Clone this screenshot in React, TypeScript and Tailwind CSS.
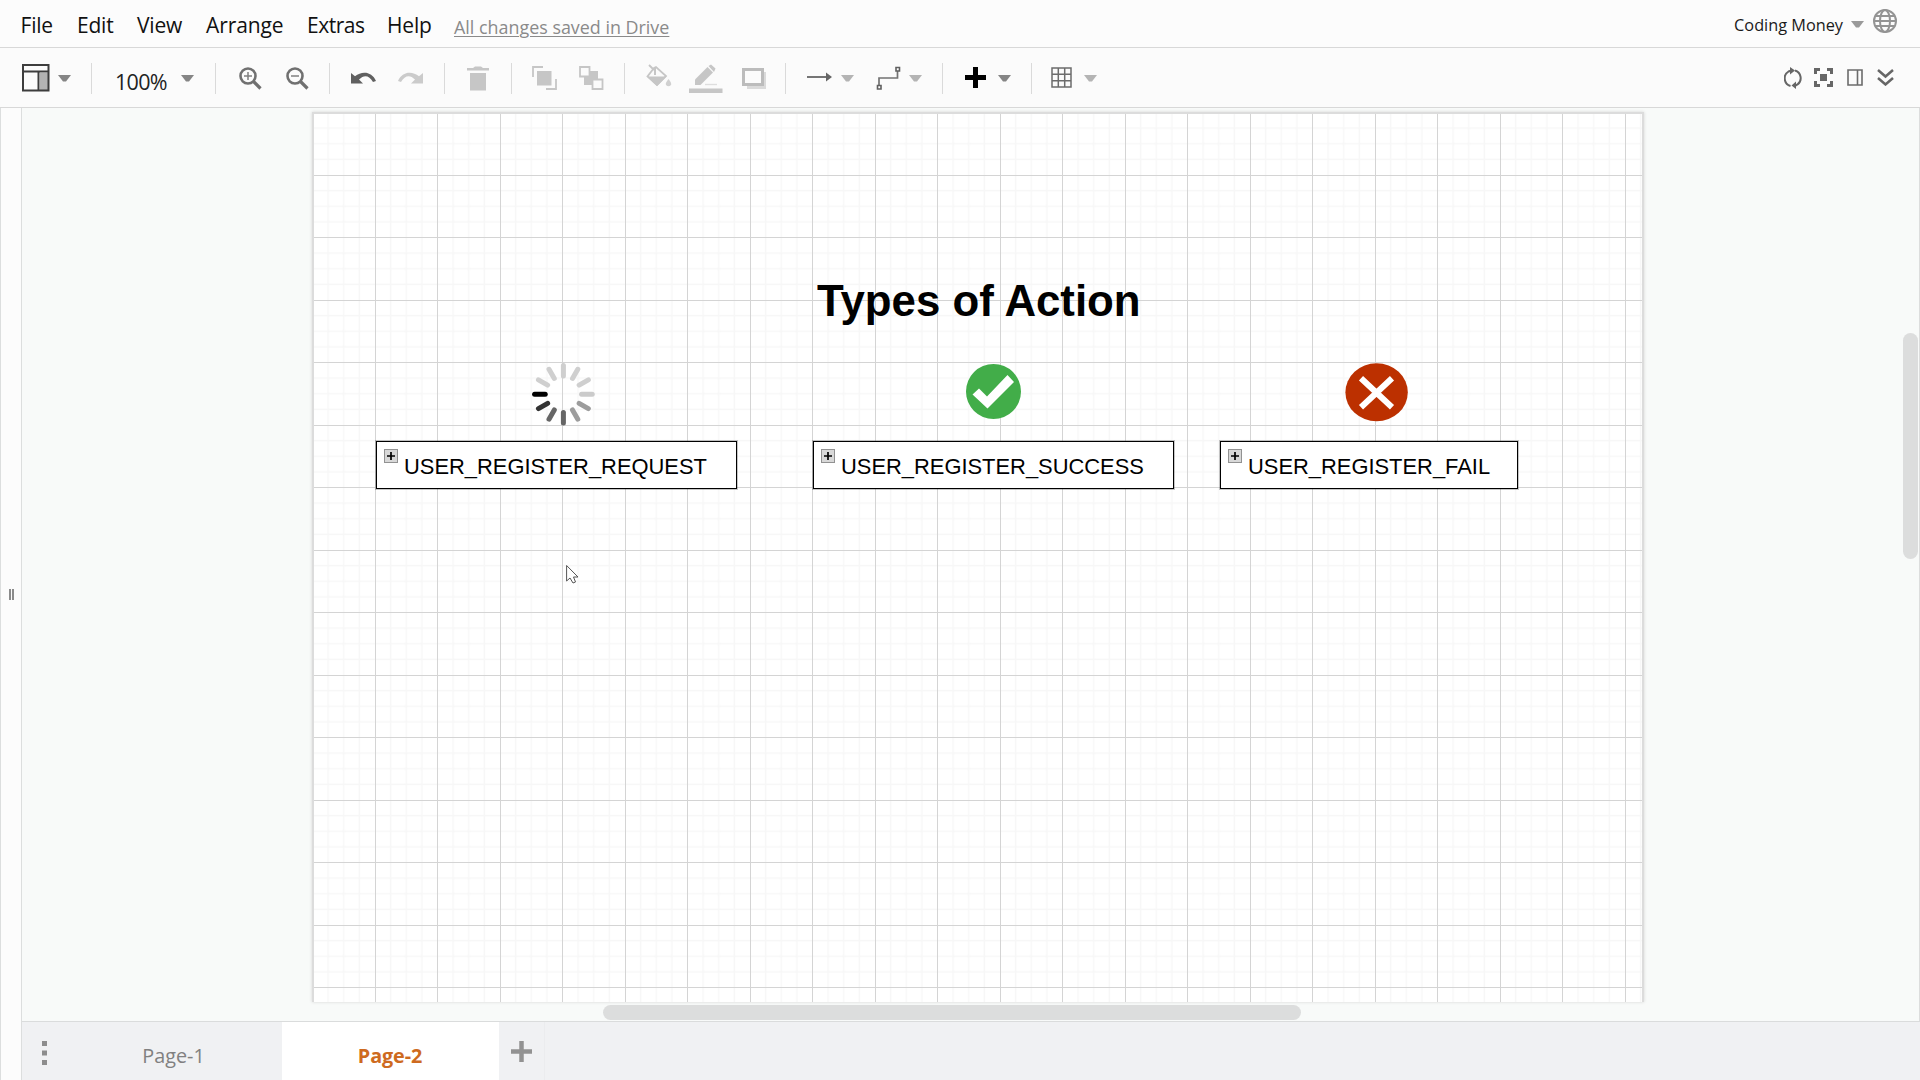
import React from "react";

type SvgProps = { w: number; h: number; className?: string; children: React.ReactNode };
const Icon = ({ w, h, className = "", children }: SvgProps) => (
  <svg width={w} height={h} viewBox={`0 0 ${w} ${h}`} className={`block shrink-0 ${className}`} fill="none">
    {children}
  </svg>
);

const Caret = ({ className = "", color = "#858585" }: { className?: string; color?: string }) => (
  <Icon w={13} h={7} className={className}>
    <path d="M0 0H13L8 6.5H5Z" fill={color} />
  </Icon>
);

const Sep = ({ className = "" }: { className?: string }) => (
  <div className={`h-[31px] w-px shrink-0 bg-[#dadada] ${className}`} />
);

function MenuBar() {
  return (
    <header className="flex h-12 shrink-0 items-center border-b border-[#d8d8d8] bg-[#fcfcfc] pl-[20.5px] pr-[23px]">
      <nav className="flex pt-[2px] text-[21px] leading-7 tracking-[-0.2px] text-[#111]">
        <span className="w-[56.5px]">File</span>
        <span className="w-[60px]">Edit</span>
        <span className="w-[69px]">View</span>
        <span className="w-[101px] tracking-[-0.1px]">Arrange</span>
        <span className="w-20 tracking-[-0.5px]">Extras</span>
        <span className="w-[67px]">Help</span>
      </nav>
      <span className="whitespace-nowrap pt-[6px] text-[17.900px] leading-6 text-[#8a8a8a] underline decoration-1 underline-offset-2">
        All changes saved in Drive
      </span>
      <span className="ml-auto whitespace-nowrap pt-[2px] text-[16.300px] leading-6 text-[#1a1a1a]">Coding Money</span>
      <Caret className="ml-2 mt-px" color="#9a9a9a" />
      <Icon w={24} h={26} className="-mt-[5px] ml-[9px]">
        <g stroke="#949494" strokeWidth="2">
          <circle cx="12" cy="13" r="11" />
          <ellipse cx="12" cy="13" rx="5" ry="11" />
          <path d="M2.5 8H21.5M2.5 18H21.5M1 13H23" />
        </g>
      </Icon>
    </header>
  );
}

function Toolbar() {
  return (
    <div className="flex h-[60px] shrink-0 items-center border-b border-[#d8d8d8] bg-[#fbfbfb] pt-px">
      <Icon w={28} h={28} className="-mt-px ml-[22px]">
        <rect x="18" y="9" width="8" height="18" fill="#b3b3b3" />
        <path d="M1 1H26.500V26.500H1ZM1 7.500H26.500M16.500 7.500V26.500" stroke="#3d3d3d" strokeWidth="2" />
      </Icon>
      <Caret className="ml-2" />
      <Sep className="ml-5" />
      <span className="ml-[23px] mt-[8px] w-[66px] text-[21.500px] leading-7 tracking-[-0.7px] text-[#222]">100%</span>
      <Caret />
      <Sep className="ml-[21px]" />
      <Icon w={23} h={23} className="ml-[23px]">
        <circle cx="9" cy="9" r="7.500" stroke="#707070" strokeWidth="2.600" />
        <path d="M14.500 14.500L21.500 21.500" stroke="#707070" strokeWidth="3.200" />
        <path d="M5 9H13M9 5V13" stroke="#808080" strokeWidth="1.500" />
      </Icon>
      <Icon w={23} h={23} className="ml-6">
        <circle cx="9" cy="9" r="7.500" stroke="#707070" strokeWidth="2.600" />
        <path d="M14.500 14.500L21.500 21.500" stroke="#707070" strokeWidth="3.200" />
        <path d="M5 9H13" stroke="#808080" strokeWidth="1.500" />
      </Icon>
      <Sep className="ml-5" />
      <Icon w={25} h={12} className="-mt-px ml-[21px]">
        <path d="M0 1L4 4.300C11-1.500 21-.5 25 9L22 10C18 3 13 2.500 8 7.500L12 11.500H0Z" fill="#606060" />
      </Icon>
      <Icon w={25} h={12} className="-mt-px ml-[22px]">
        <path d="M25 1L21 4.300C14-1.500 4-.5 0 9L3 10C7 3 12 2.500 17 7.500L13 11.500H25Z" fill="#cbcbcb" />
      </Icon>
      <Sep className="ml-[21px]" />
      <Icon w={23} h={25} className="ml-[22px]">
        <path d="M0 2H6L8 .5H14L16 2H22V4.500H0ZM3 7H19V24.500H3Z" fill="#c6c6c6" />
      </Icon>
      <Sep className="ml-[21px]" />
      <Icon w={25} h={24} className="-mt-px ml-5">
        <rect x="5" y="5" width="14.500" height="14.500" fill="#c6c6c6" />
        <path d="M1 11V1H11M24 13V23H14" stroke="#c6c6c6" strokeWidth="1.800" />
      </Icon>
      <Icon w={25} h={24} className="-mt-px ml-[22px]">
        <rect x="5" y="5" width="14" height="14" fill="#c6c6c6" />
        <path d="M1 1H10.500V10.500H1ZM13.500 13.500H23.500V23H13.500Z" fill="#fbfbfb" stroke="#c6c6c6" strokeWidth="1.800" />
      </Icon>
      <Sep className="ml-5" />
      <Icon w={26} h={24} className="ml-[21px] -mt-[4px]">
        <path d="M3 1L8 6M8 4L1.500 12.500 11 21 20 12 10 3Z" stroke="#c6c6c6" strokeWidth="1.800" />
        <path d="M1 12.500H20.500L11 22Z" fill="#c6c6c6" />
        <path d="M9 4V11" stroke="#c6c6c6" strokeWidth="2" />
        <path d="M22.500 15Q26 19 25 21 22.500 23.500 20 21 19 19 22.500 15Z" fill="#d0d0d0" />
      </Icon>
      <Icon w={34} h={29} className="ml-[17px]">
        <path d="M6 21V15.500L18.500 3 24 8.500 11.500 21Z" fill="#c6c6c6" />
        <path d="M19.500 2L22 .5 26.500 4.500 25 8Z" fill="#c6c6c6" />
        <path d="M16 20.500H28" stroke="#dedede" strokeWidth="1.300" />
        <rect y="24.500" width="33.500" height="4.500" fill="#c6c6c6" />
      </Icon>
      <Icon w={25} h={21} className="ml-[19px]">
        <path d="M5 4H24V21H5Z" fill="#dadada" />
        <path d="M1.500 1.500H20.500V16.500H1.500Z" fill="#fbfbfb" stroke="#bcbcbc" strokeWidth="3" />
      </Icon>
      <Sep className="ml-[18px]" />
      <Icon w={25} h={10} className="ml-[21px] -mt-[3px]">
        <path d="M0 5H20" stroke="#666" strokeWidth="1.800" />
        <path d="M19 .5L25 5 19 9.500Z" fill="#666" />
      </Icon>
      <Caret className="ml-[9px]" color="#b4b4b4" />
      <Icon w={25} h={24} className="ml-[22px]">
        <path d="M3 19V12H21.500V5" stroke="#737373" strokeWidth="1.700" />
        <path d="M1.500 19.500H5V23H1.500ZM20 1.500H23.500V5H20Z" fill="white" stroke="#606060" strokeWidth="1.600" />
      </Icon>
      <Caret className="ml-2" color="#b4b4b4" />
      <Sep className="ml-5" />
      <Icon w={21} h={21} className="ml-[22px] -mt-[2px]">
        <path d="M10.500 0V21M0 10.500H21" stroke="#000" strokeWidth="5" />
      </Icon>
      <Caret className="ml-3" />
      <Sep className="ml-5" />
      <Icon w={21} h={21} className="ml-[19px] -mt-[2px]">
        <path d="M1 1H20V20H1ZM1 7.300H20M1 13.700H20M7.300 1V20M13.700 1V20" stroke="#6c6c6c" strokeWidth="1.500" />
      </Icon>
      <Caret className="ml-[12px]" color="#b4b4b4" />
      <div className="-mt-px ml-auto flex items-center pr-[26px]">
        <Icon w={18} h={22}>
          <path d="M6.500 19A8 8 0 0 1 4.500 4.500L7.500 3.500M11.500 18.500L13.500 17.500A8 8 0 0 0 11 3.500" stroke="#666" strokeWidth="2" />
          <path d="M6 0L11 3.500 6 7.500ZM12 14.500L7.500 18.500 12 22Z" fill="#666" />
        </Icon>
        <Icon w={19} h={19} className="ml-3">
          <path d="M1.500 6V1.500H6M13 1.500H17.500V6M17.500 13V17.500H13M6 17.500H1.500V13" stroke="#666" strokeWidth="3" />
          <rect x="6" y="6" width="7" height="7" fill="#666" />
        </Icon>
        <Icon w={16} h={17} className="ml-[14px]">
          <path d="M1 1H15V16H1ZM10.500 1V16" stroke="#6c6c6c" strokeWidth="1.600" />
        </Icon>
        <Icon w={17} h={17} className="ml-[14px]">
          <path d="M1 1L8.500 7.500 16 1M1 9L8.500 15.500 16 9" stroke="#666" strokeWidth="2.500" />
        </Icon>
      </div>
    </div>
  );
}

const spokes = ["#cfcfcf", "#cfcfcf", "#cfcfcf", "#cbcbcb", "#9c9c9c", "#9c9c9c", "#666", "#666", "#333", "#000", "#cfcfcf", "#cfcfcf"];

function Spinner() {
  return (
    <Icon w={64} h={64}>
      {spokes.map((c, i) => (
        <path key={i} d="M32.400 3.400V14" stroke={c} strokeWidth="5" strokeLinecap="round" transform={`rotate(${i * 30} 32.4 32.2)`} />
      ))}
    </Icon>
  );
}

function ActionBox({ label, className }: { label: string; className: string }) {
  return (
    <div
      className={`absolute top-[333px] flex h-[48px] items-start border border-black bg-white pl-[7px] pt-[7px] shadow-[0_0_0_1px_rgba(0,0,0,0.22)] ${className}`}
    >
      <Icon w={14} h={14}>
        <rect x=".5" y=".5" width="13" height="13" fill="#d8d8d8" stroke="#929292" />
        <path d="M7 3V11M3 7H11" stroke="#000" strokeWidth="1.700" />
      </Icon>
      <span className="ml-[6px] mt-[5px] whitespace-nowrap font-['Liberation_Sans',Arial,sans-serif] text-[21.900px] leading-[26px] text-black">
        {label}
      </span>
    </div>
  );
}

const lines = (count: number) => Array.from({ length: count }, (_, i) => Math.ceil((i + 1) * 62.5) + 0.5);

function Diagram() {
  return (
    <main className="relative min-h-0 flex-1 overflow-hidden border-b border-[#dadcdc] bg-[#f8faf9]">
      <div className="absolute left-[290px] top-[4px] h-[890px] w-[1332px] overflow-hidden border-2 border-b-0 border-[#dcdcdc] bg-white shadow-[0_0_3px_#d5d5d5]">
        <svg className="absolute -left-[2px] -top-[2px]" width="1332" height="890">
          <defs>
            <pattern id="grid" x="0.500" y="0.500" width="62.500" height="62.500" patternUnits="userSpaceOnUse">
              <path d="M15.600 0V62.500M31.200 0V62.500M46.900 0V62.500M0 15.600H62.500M0 31.200H62.500M0 46.900H62.500" stroke="#f7f7f7" strokeWidth="1.500" />
            </pattern>
          </defs>
          <rect width="1332" height="890" fill="url(#grid)" />
          {lines(21).map((x) => (
            <path key={`v${x}`} d={`M${x} 0V890`} stroke="#d4d4d4" />
          ))}
          {lines(14).map((y) => (
            <path key={`h${y}`} d={`M0 ${y}H1332`} stroke="#d4d4d4" />
          ))}
        </svg>
      </div>
      <h1 className="absolute left-[795px] top-[166px] whitespace-nowrap font-['Liberation_Sans',Arial,sans-serif] text-[43.800px] font-bold leading-[54px] text-black">
        Types of Action
      </h1>
      <div className="absolute left-[509px] top-[254px]">
        <Spinner />
      </div>
      <div className="absolute left-[944px] top-[256px]">
        <Icon w={55} h={55}>
          <circle cx="27.500" cy="27.500" r="27.500" fill="#42ad49" />
          <path d="M6.500 30.500L13 24.500 21 32.500 41.500 11 48 18 21.500 44.500Z" fill="white" />
        </Icon>
      </div>
      <div className="absolute left-[1323px] top-[255px]">
        <Icon w={63} h={59}>
          <ellipse cx="31.600" cy="29.300" rx="31.200" ry="29" fill="#bc3000" />
          <path d="M16 15.300L47 44.300M47 15.300L16 44.300" stroke="white" strokeWidth="6" />
        </Icon>
      </div>
      <ActionBox label="USER_REGISTER_REQUEST" className="left-[354px] w-[361px]" />
      <ActionBox label="USER_REGISTER_SUCCESS" className="left-[791px] w-[361px]" />
      <ActionBox label="USER_REGISTER_FAIL" className="left-[1198px] w-[298px]" />
      <div className="absolute left-[544px] top-[457px]">
        <Icon w={13} h={20}>
          <path d="M.6 .5V16L4 13 7 18 9.500 17 7.500 12H12Z" fill="white" stroke="#555" />
        </Icon>
      </div>
      <div className="absolute left-[581px] top-[897px] h-[15px] w-[698px] rounded-full bg-[#dcdddd]" />
      <div className="absolute right-[2px] top-[225px] h-[226px] w-[15px] rounded-full bg-[#dcdddd]" />
      <div className="absolute right-0 top-0 h-full w-px bg-[#dcdddd]" />
    </main>
  );
}

function PageTabs() {
  return (
    <footer className="flex h-[58px] shrink-0 bg-[#f0f1f3]">
      <div className="flex w-[45px] justify-center pt-[19px]">
        <Icon w={5} h={24}>
          <path d="M0 0H5V5H0ZM0 9.500H5V14.500H0ZM0 19H5V24H0Z" fill="#8d8d8d" />
        </Icon>
      </div>
      <div className="flex w-[215px] justify-center pr-[2px] pt-[20px] text-[19.800px] leading-7 text-[#808080]">Page-1</div>
      <div className="flex w-[217px] justify-center bg-white pr-px pt-[20px] text-[19.800px] font-bold leading-7 tracking-[-0.1px] text-[#ce6a20]">
        Page-2
      </div>
      <div className="flex w-[46px] justify-center border-r border-[#ebecee] pt-[19px]">
        <Icon w={21} h={21}>
          <path d="M10.500 0V21M0 10.500H21" stroke="#929292" strokeWidth="4.500" />
        </Icon>
      </div>
    </footer>
  );
}

export default function App() {
  return (
    <div className="flex h-[1080px] w-[1920px] flex-col overflow-hidden bg-[#fcfcfc] font-['Open_Sans','Noto_Sans',sans-serif]">
      <MenuBar />
      <Toolbar />
      <div className="flex min-h-0 flex-1">
        <aside className="flex w-[22px] shrink-0 items-center border-x border-[#dcdede] bg-[#fcfcfc] pl-[8px]">
          <Icon w={5} h={11}>
            <path d="M1 0V11M4 0V11" stroke="#666" strokeWidth="1.500" />
          </Icon>
        </aside>
        <div className="flex min-w-0 flex-1 flex-col">
          <Diagram />
          <PageTabs />
        </div>
      </div>
    </div>
  );
}
